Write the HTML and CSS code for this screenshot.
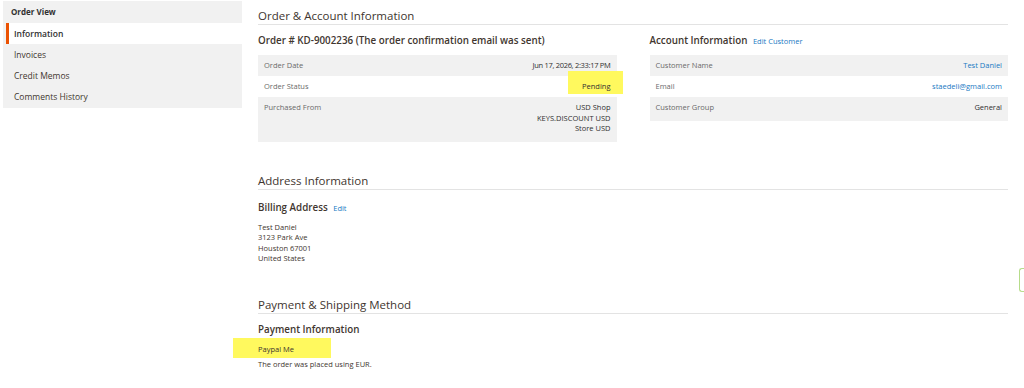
FILE: index.html
```html
<!DOCTYPE html>
<html lang="en">
<head>
  <meta charset="UTF-8">
  <title>Order View</title>
  <link rel="stylesheet" href="styles.css">
</head>
<body>
  <div class="page">
    <aside class="side">
      <div class="side-title">Order View</div>
      <ul class="side-tabs">
        <li class="active">Information</li>
        <li>Invoices</li>
        <li>Credit Memos</li>
        <li>Comments History</li>
      </ul>
    </aside>

    <main class="main">
      <section class="block">
        <h2 class="block-title">Order &amp; Account Information</h2>
        <div class="cols">
          <div class="col">
            <h3 class="sub-title">Order # KD-9002236 (The order confirmation email was sent)</h3>
            <table class="info">
              <tr class="odd"><th>Order Date</th><td class="date">Jun 17, 2026, 2:33:17 PM</td></tr>
              <tr><th>Order Status</th><td class="mark-cell"><span class="mark mark-status"></span><span class="over">Pending</span></td></tr>
              <tr class="odd"><th>Purchased From</th><td>USD Shop<br>KEYS.DISCOUNT USD<br>Store USD</td></tr>
            </table>
          </div>
          <div class="col">
            <h3 class="sub-title">Account Information <a href="#">Edit Customer</a></h3>
            <table class="info">
              <tr class="odd"><th>Customer Name</th><td><a href="#">Test Daniel</a></td></tr>
              <tr><th>Email</th><td><a href="#">staedeli@gmail.com</a></td></tr>
              <tr class="odd"><th>Customer Group</th><td>General</td></tr>
            </table>
          </div>
        </div>
      </section>

      <section class="block addr">
        <h2 class="block-title">Address Information</h2>
        <h3 class="sub-title">Billing Address <a href="#">Edit</a></h3>
        <address class="address">Test Daniel<br>3123 Park Ave<br>Houston 67001<br>United States</address>
      </section>

      <section class="block pay">
        <h2 class="block-title">Payment &amp; Shipping Method</h2>
        <h3 class="sub-title">Payment Information</h3>
        <div class="method"><span class="mark mark-pay"></span><span class="over">Paypal Me</span></div>
        <p class="note">The order was placed using EUR.</p>
      </section>
    </main>
  </div>
  <div class="side-tab-edge"></div>
</body>
</html>
```

FILE: styles.css
```css
body {
  margin: 0;
  font-family: "Open Sans", "Liberation Sans", sans-serif;
  color: #303030;
  background: #fff;
}

.page {
  display: flex;
  align-items: flex-start;
}

a {
  color: #1979c3;
  text-decoration: none;
}

/* colonne de gauche */
.side {
  width: 239px;
  margin: 1px 0 0 3px;
  background: #f1f1f1;
  padding-bottom: 1px;
}

.side-title {
  height: 22px;
  line-height: 22px;
  padding-left: 8px;
  font-size: 8px;
  font-weight: 700;
}

.side-tabs {
  list-style: none;
  margin: 0;
  padding: 0 0 0 3px;
}

.side-tabs li {
  height: 21px;
  line-height: 21px;
  padding-left: 8px;
  font-size: 8.5px;
  color: #41362f;
}

.side-tabs li.active {
  background: #fff;
  border-left: 3px solid #eb5202;
  padding-left: 5px;
  font-weight: 600;
  color: #303030;
}

/* contenu */
.main {
  width: 750px;
  margin-left: 16px;
}

.block-title {
  margin: 0;
  padding-top: 8px;
  height: 16px;
  line-height: 16px;
  font-size: 11.5px;
  font-weight: 400;
  color: #41362f;
  border-bottom: 1px solid #e3e3e3;
}

.cols {
  display: flex;
  gap: 33px;
}

.col {
  flex: 1;
}

.sub-title {
  margin: 9px 0 7px;
  line-height: 14px;
  font-size: 9.8px;
  font-weight: 600;
  color: #41362f;
}

.sub-title a {
  font-size: 7.5px;
  font-weight: 400;
  margin-left: 3px;
}

.info {
  width: 100%;
  border-collapse: collapse;
  font-size: 7.5px;
}

.info th,
.info td {
  height: 21px;
  padding: 0 6px;
  vertical-align: top;
  line-height: 10.5px;
  padding-top: 5px;
  box-sizing: border-box;
}

.info th {
  text-align: left;
  font-weight: 400;
  color: #6a6a6a;
}

.info td {
  text-align: right;
  color: #303030;
}

.info td.date {
  letter-spacing: -0.3px;
}

.info tr.odd {
  background: #f1f1f1;
}

.info tr.odd:last-child td {
  padding-bottom: 8px;
}

/* surlignage jaune */
.mark-cell,
.method {
  position: relative;
}

.mark {
  position: absolute;
  background: #fff95e;
}

.over {
  position: relative;
}

.mark-status {
  right: -6px;
  top: -5px;
  width: 55px;
  height: 23px;
}

.addr .block-title {
  margin-top: 23px;
}

.addr .sub-title {
  margin-top: 11px;
}

.address {
  margin-top: 1px;
  font-style: normal;
  font-size: 7.5px;
  line-height: 10.5px;
  color: #41362f;
}

.pay .block-title {
  margin-top: 25px;
}

.method {
  margin-top: 7px;
  font-size: 7.5px;
  line-height: 10px;
  color: #41362f;
}

.mark-pay {
  left: -25px;
  top: -6px;
  width: 98px;
  height: 20px;
}

.note {
  margin: 5px 0 0;
  font-size: 7.5px;
  line-height: 10px;
  color: #41362f;
}

.side-tab-edge {
  position: absolute;
  right: 0;
  top: 268px;
  width: 4px;
  height: 22px;
  border: 1px solid #b6dc8a;
  border-right: none;
  border-radius: 3px 0 0 3px;
}
```
